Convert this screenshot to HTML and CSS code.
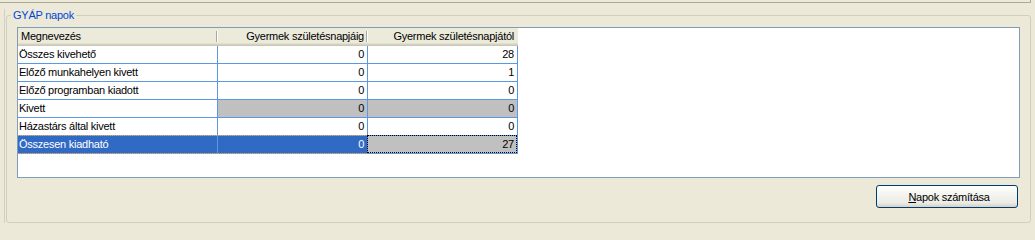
FILE: index.html
```html
<!DOCTYPE html>
<html lang="hu">
<head>
<meta charset="utf-8">
<title>GYÁP napok</title>
<link rel="stylesheet" href="styles.css">
</head>
<body>
<div class="topline"></div>
<div class="frame">
  <fieldset class="group">
    <legend class="legend">GYÁP napok</legend>
    <div class="group-body">
      <div class="grid">
        <div class="row head">
          <div class="hcell c1">Megnevezés</div>
          <div class="hcell c2 num">Gyermek születésnapjáig</div>
          <div class="hcell c3 num">Gyermek születésnapjától</div>
        </div>
        <div class="row">
          <div class="cell c1">Összes kivehető</div>
          <div class="cell c2 num">0</div>
          <div class="cell c3 num">28</div>
        </div>
        <div class="row">
          <div class="cell c1">Előző munkahelyen kivett</div>
          <div class="cell c2 num">0</div>
          <div class="cell c3 num">1</div>
        </div>
        <div class="row">
          <div class="cell c1">Előző programban kiadott</div>
          <div class="cell c2 num">0</div>
          <div class="cell c3 num">0</div>
        </div>
        <div class="row">
          <div class="cell c1">Kivett</div>
          <div class="cell c2 num ro">0</div>
          <div class="cell c3 num ro">0</div>
        </div>
        <div class="row">
          <div class="cell c1">Házastárs által kivett</div>
          <div class="cell c2 num">0</div>
          <div class="cell c3 num">0</div>
        </div>
        <div class="row sel">
          <div class="cell c1">Összesen kiadható</div>
          <div class="cell c2 num">0</div>
          <div class="cell c3 num ro focus">27</div>
        </div>
      </div>
      <div class="actions">
        <button class="btn" type="button"><u>N</u>apok számítása</button>
      </div>
    </div>
  </fieldset>
</div>
</body>
</html>
```

FILE: styles.css
```css
html, body {
  margin: 0;
  padding: 0;
  height: 223px;
  overflow: hidden;
  background: #ECE9D8;
  font-family: "Liberation Sans", Arial, sans-serif;
  font-size: 11px;
  letter-spacing: -0.25px;
  color: #000;
}

.topline {
  width: 1030px;
  height: 2px;
  border-bottom: 1px solid #ACA899;
  border-right: 1px solid #ACA899;
}

.frame {
  margin-left: 4px;
  border-left: 1px solid #D3D0C1;
  padding-left: 1px;
  height: 220px;
}

.group {
  box-sizing: border-box;
  margin: 6px 0 0 0;
  padding: 0;
  width: 1025px;
  height: 214px;
  border: 1px solid #D0D0BF;
  border-radius: 3px;
  min-width: 0;
}

.legend {
  margin-left: 4px;
  padding: 0 2px;
  color: #0046D5;
  line-height: 13px;
  font-size: 11px;
}

.group-body {
  padding: 5px 10px 0 10px;
}

.grid {
  box-sizing: border-box;
  height: 151px;
  border: 1px solid #7F9DB9;
  background: #fff;
}

.row {
  display: flex;
  height: 18px;
}

.c1 { width: 200px; }
.c2 { width: 150px; }
.c3 { width: 150px; }

.hcell {
  box-sizing: border-box;
  position: relative;
  height: 18px;
  line-height: 17px;
  padding: 0 4px 0 3px;
  background: #EBEADB;
  box-shadow: inset 0 -1px #CBC7B8, inset 0 -2px #D6D2C2, inset 0 -3px #E2DECD;
  white-space: nowrap;
}

.hcell::after {
  content: "";
  position: absolute;
  right: 1px;
  top: 3px;
  bottom: 4px;
  width: 1px;
  background: #ACA899;
  box-shadow: 1px 0 #fff;
}

.hcell.c3::after {
  display: none;
}

.cell {
  box-sizing: border-box;
  position: relative;
  height: 18px;
  line-height: 17px;
  padding: 0 3px 0 1px;
  border-right: 1px solid #5C97E3;
  border-bottom: 1px solid #5C97E3;
  white-space: nowrap;
}

.num {
  text-align: right;
}

.cell.num {
  padding-right: 3px;
}

.ro {
  background: #C0C0C0;
}

.sel {
  position: relative;
}

.sel .c1,
.sel .c2 {
  background: #316AC5;
  color: #fff;
}

.sel::after {
  content: "";
  position: absolute;
  left: 0;
  top: -1px;
  width: 349px;
  height: 17px;
  border-top: 1px dotted #E9A23B;
  border-bottom: 1px dotted #E9A23B;
  pointer-events: none;
}

.focus::after {
  content: "";
  position: absolute;
  left: -1px;
  right: 0;
  top: -1px;
  bottom: 0;
  border: 1px dotted #000;
}

.actions {
  display: flex;
  justify-content: flex-end;
  padding: 7px 2px 0 0;
}

.btn {
  box-sizing: border-box;
  width: 142px;
  height: 23px;
  margin: 0;
  padding: 0 0 0 4px;
  border: 1px solid #003C74;
  border-radius: 3px;
  background: linear-gradient(#FFFFFF 0%, #F4F4F0 40%, #ECEBE6 80%, #D6D0C5 100%);
  font-family: inherit;
  font-size: 11px;
  letter-spacing: -0.25px;
  color: #000;
}
```
